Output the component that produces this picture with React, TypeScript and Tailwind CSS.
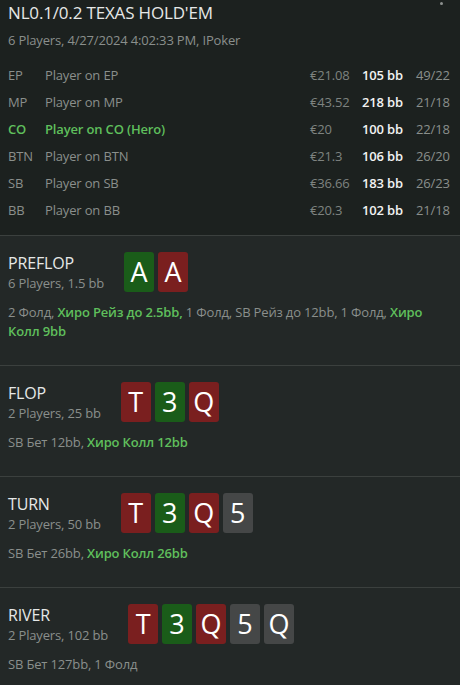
type Player = { pos: string; name: string; money: string; bb: string; stats: string; hero?: boolean };

const players: Player[] = [
  { pos: 'EP', name: 'Player on EP', money: '€21.08', bb: '105 bb', stats: '49/22' },
  { pos: 'MP', name: 'Player on MP', money: '€43.52', bb: '218 bb', stats: '21/18' },
  { pos: 'CO', name: 'Player on CO (Hero)', money: '€20', bb: '100 bb', stats: '22/18', hero: true },
  { pos: 'BTN', name: 'Player on BTN', money: '€21.3', bb: '106 bb', stats: '26/20' },
  { pos: 'SB', name: 'Player on SB', money: '€36.66', bb: '183 bb', stats: '26/23' },
  { pos: 'BB', name: 'Player on BB', money: '€20.3', bb: '102 bb', stats: '21/18' },
];

type Card = { v: string; c: 'g' | 'r' | 'x' };

const cardBg = {
  g: 'bg-[#1a5c19]',
  r: 'bg-[#7a1f1f]',
  x: 'bg-[#454747]',
};

type Action = { t: string; hero?: boolean };

const streets: { name: string; info: string; cards: Card[]; actions: Action[] }[] = [
  {
    name: 'PREFLOP',
    info: '6 Players, 1.5 bb',
    cards: [{ v: 'A', c: 'g' }, { v: 'A', c: 'r' }],
    actions: [
      { t: '2 Фолд, ' },
      { t: 'Хиро Рейз до 2.5bb,', hero: true },
      { t: ' 1 Фолд, SB Рейз до 12bb, 1 Фолд, ' },
      { t: 'Хиро Колл 9bb', hero: true },
    ],
  },
  {
    name: 'FLOP',
    info: '2 Players, 25 bb',
    cards: [{ v: 'T', c: 'r' }, { v: '3', c: 'g' }, { v: 'Q', c: 'r' }],
    actions: [{ t: 'SB Бет 12bb, ' }, { t: 'Хиро Колл 12bb', hero: true }],
  },
  {
    name: 'TURN',
    info: '2 Players, 50 bb',
    cards: [{ v: 'T', c: 'r' }, { v: '3', c: 'g' }, { v: 'Q', c: 'r' }, { v: '5', c: 'x' }],
    actions: [{ t: 'SB Бет 26bb, ' }, { t: 'Хиро Колл 26bb', hero: true }],
  },
  {
    name: 'RIVER',
    info: '2 Players, 102 bb',
    cards: [
      { v: 'T', c: 'r' },
      { v: '3', c: 'g' },
      { v: 'Q', c: 'r' },
      { v: '5', c: 'x' },
      { v: 'Q', c: 'x' },
    ],
    actions: [{ t: 'SB Бет 127bb, 1 Фолд' }],
  },
];

export default function App() {
  return (
    <div className="w-[460px] h-[685px] overflow-hidden bg-[#232827] font-['Open_Sans',sans-serif] tracking-[-0.01em]">
      {/* header */}
      <div className="relative bg-[#1c211f] px-2 pt-[1px] pb-[11px] border-b border-[#3b403e]">
        <div className="absolute right-[17px] -top-[3px] flex flex-col gap-[2px]">
          <span className="w-[3px] h-[3px] rounded-full bg-[#8d918f]" />
          <span className="w-[3px] h-[3px] rounded-full bg-[#8d918f]" />
        </div>
        <div className="text-[17px] leading-[24px] tracking-[-0.01em] text-[#e6e8e7]">NL0.1/0.2 TEXAS HOLD'EM</div>
        <div className="mt-[6px] text-[13px] leading-[18px] text-[#8a8f8c]">
          6 Players, 4/27/2024 4:02:33 PM, IPoker
        </div>
        <div className="mt-[13px] flex flex-col">
          {players.map((p) => (
            <div key={p.pos} className="flex items-center h-[27px] text-[13px]">
              <span className={`w-[37px] ${p.hero ? 'text-[#5fbf5c] font-semibold' : 'text-[#8a8f8c]'}`}>{p.pos}</span>
              <span className={`flex-1 ${p.hero ? 'text-[#5fbf5c] font-semibold' : 'text-[#8a8f8c]'}`}>{p.name}</span>
              <span className="w-[52px] text-[#7e8380]">{p.money}</span>
              <span className="w-[54px] text-[#f2f3f2] font-semibold">{p.bb}</span>
              <span className="w-[36px] text-[#8a8f8c]">{p.stats}</span>
            </div>
          ))}
        </div>
      </div>

      {streets.map((s) => (
        <div key={s.name} className="px-2 pt-4 pb-[24px] border-b border-[#3b403e]">
          <div className="flex items-start gap-5">
            <div className="flex flex-col">
              <span className="text-[16px] leading-[22px] text-[#e6e8e7]">{s.name}</span>
              <span className="text-[13px] leading-[18px] text-[#8a8f8c] whitespace-nowrap">{s.info}</span>
            </div>
            <div className="flex gap-[4px]">
              {s.cards.map((c, i) => (
                <div
                  key={i}
                  className={`w-[30px] h-[40px] rounded-[3px] flex items-center justify-center text-[27px] tracking-normal text-white ${cardBg[c.c]}`}
                >
                  {c.v}
                </div>
              ))}
            </div>
          </div>
          <div className="mt-[11px] pr-2 text-[13px] leading-[19px] text-[#8a8f8c]">
            {s.actions.map((a, i) => (
              <span key={i} className={a.hero ? 'text-[#5fbf5c] font-semibold' : ''}>
                {a.t}
              </span>
            ))}
          </div>
        </div>
      ))}
    </div>
  );
}
